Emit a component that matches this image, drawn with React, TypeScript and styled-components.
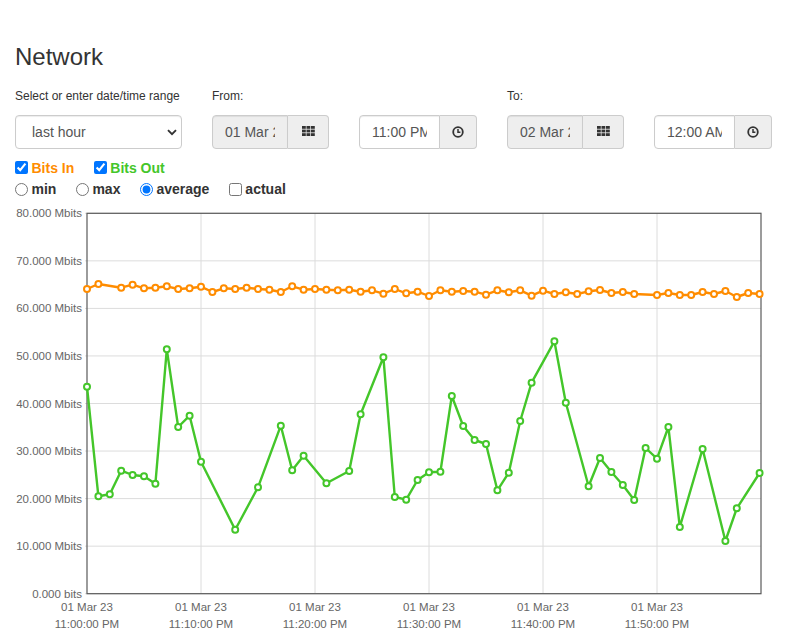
import styled, { createGlobalStyle } from 'styled-components';

const ORANGE = '#ff8c00';
const GREEN = '#44c62a';

// minute offset from 11:00 PM -> Mbits
const bitsIn: [number, number][] = [
  [0, 64.08], [1, 65.13], [3, 64.35], [4, 64.98], [5, 64.23], [6, 64.35], [7, 64.65],
  [8, 64.08], [9, 64.23], [10, 64.56], [11, 63.45], [12, 64.23], [13, 64.08], [14, 64.35],
  [15, 64.08], [16, 63.93], [17, 63.45], [18, 64.65], [19, 63.93], [20, 64.08], [21, 63.93],
  [22, 63.83], [23, 63.93], [24, 63.51], [25, 63.81], [26, 63.09], [27, 64.08], [28, 63.17],
  [29, 63.51], [30, 62.61], [31, 63.81], [32, 63.51], [33, 63.66], [34, 63.51], [35, 62.88],
  [36, 63.81], [37, 63.39], [38, 63.81], [39, 62.67], [40, 63.72], [41, 63.03], [42, 63.39],
  [43, 63.03], [44, 63.6], [45, 63.87], [46, 63.24], [47, 63.45], [48, 63.03], [50, 62.82],
  [51, 63.24], [52, 62.82], [53, 62.82], [54, 63.45], [55, 63.03], [56, 63.66], [57, 62.4],
  [58, 63.24], [59, 63.03],
];

const bitsOut: [number, number][] = [
  [0, 43.53], [1, 20.48], [2, 20.9], [3, 25.87], [4, 24.96], [5, 24.69], [6, 23.13],
  [7, 51.4], [8, 35.06], [9, 37.43], [10, 27.76], [13, 13.46], [15, 22.38], [17, 35.33],
  [18, 25.95], [19, 29.02], [21, 23.22], [23, 25.8], [24, 37.73], [26, 49.72], [27, 20.34],
  [28, 19.77], [29, 23.91], [30, 25.53], [31, 25.66], [32, 41.58], [33, 35.27], [34, 32.32],
  [35, 31.48], [36, 21.75], [37, 25.45], [38, 36.32], [39, 44.37], [41, 53.08], [42, 40.17],
  [44, 22.59], [45, 28.54], [46, 25.59], [47, 22.86], [48, 19.71], [49, 30.64], [50, 28.39],
  [51, 35.06], [52, 14.03], [54, 30.43], [56, 11.08], [57, 17.96], [59, 25.38],
];

const CHART_W = 757;
const CHART_H = 434;
const plot = { left: 72, right: 746, top: 13.3, bottom: 393.7 };
const xOf = (m: number) => plot.left + m * 11.4;
const yOf = (v: number) => plot.bottom - v * ((plot.bottom - plot.top) / 80);

const App = () => {
  return (
    <Page>
      <GlobalStyle />
      <Title>Network</Title>
      <Form>
        <FieldLabel>Select or enter date/time range</FieldLabel>
        <FieldLabel $span={2}>From:</FieldLabel>
        <FieldLabel $span={2}>To:</FieldLabel>

        <SelectWrap>
          <Select defaultValue="last hour">
            <option>last hour</option>
            <option>last 24 hours</option>
            <option>last week</option>
            <option>custom</option>
          </Select>
          <Chevron width="10" height="7" viewBox="0 0 10 7">
            <path d="M1 1.2 L5 5.2 L9 1.2" fill="none" stroke="#333" strokeWidth="1.9" />
          </Chevron>
        </SelectWrap>

        <InputGroup>
          <Field readOnly $muted defaultValue="01 Mar 2023" />
          <Addon $w={41}>
            <GridIcon />
          </Addon>
        </InputGroup>
        <InputGroup>
          <Field defaultValue="11:00 PM" />
          <Addon $w={37}>
            <ClockIcon />
          </Addon>
        </InputGroup>

        <InputGroup>
          <Field readOnly $muted defaultValue="02 Mar 2023" />
          <Addon $w={41}>
            <GridIcon />
          </Addon>
        </InputGroup>
        <InputGroup>
          <Field defaultValue="12:00 AM" />
          <Addon $w={37}>
            <ClockIcon />
          </Addon>
        </InputGroup>
      </Form>

      <OptionRow $top={8}>
        <Option $color={ORANGE}>
          <input type="checkbox" defaultChecked />
          Bits In
        </Option>
        <Option $color={GREEN}>
          <input type="checkbox" defaultChecked />
          Bits Out
        </Option>
      </OptionRow>
      <OptionRow $top={0}>
        <Option>
          <input type="radio" name="agg" />
          min
        </Option>
        <Option>
          <input type="radio" name="agg" />
          max
        </Option>
        <Option>
          <input type="radio" name="agg" defaultChecked />
          average
        </Option>
        <Option>
          <input type="checkbox" />
          actual
        </Option>
      </OptionRow>

      <Chart />
    </Page>
  );
};

export default App;

const Chart = () => {
  const yTicks = [0, 10, 20, 30, 40, 50, 60, 70, 80];
  const xTicks = [0, 10, 20, 30, 40, 50];
  const line = (data: [number, number][]) =>
    data.map(([m, v]) => `${xOf(m).toFixed(1)},${yOf(v).toFixed(1)}`).join(' ');

  return (
    <ChartSvg width={CHART_W} height={CHART_H} viewBox={`0 0 ${CHART_W} ${CHART_H}`}>
      {yTicks.map((v) => (
        <g key={v}>
          <line x1={plot.left - 2} x2={plot.right} y1={yOf(v)} y2={yOf(v)} stroke="#dcdcdc" strokeWidth="1" />
          <AxisText x={plot.left - 5} y={yOf(v) + 4} textAnchor="end">
            {v === 0 ? '0.000 bits' : `${v}.000 Mbits`}
          </AxisText>
        </g>
      ))}
      {xTicks.map((m) => (
        <g key={m}>
          {m > 0 && (
            <line x1={xOf(m)} x2={xOf(m)} y1={plot.top} y2={plot.bottom} stroke="#dcdcdc" strokeWidth="1" />
          )}
          <AxisText x={xOf(m)} y={411} textAnchor="middle">
            01 Mar 23
          </AxisText>
          <AxisText x={xOf(m)} y={428} textAnchor="middle">
            {`11:${m === 0 ? '00' : m}:00 PM`}
          </AxisText>
        </g>
      ))}
      <rect
        x={plot.left}
        y={plot.top}
        width={plot.right - plot.left}
        height={plot.bottom - plot.top}
        fill="none"
        stroke="#5a5a5a"
        strokeWidth="1.2"
      />

      <polyline points={line(bitsIn)} fill="none" stroke={ORANGE} strokeWidth="2.4" strokeLinejoin="round" />
      {bitsIn.map(([m, v]) => (
        <circle key={`i${m}`} cx={xOf(m)} cy={yOf(v)} r="3" fill="#fff" stroke={ORANGE} strokeWidth="2" />
      ))}

      <polyline points={line(bitsOut)} fill="none" stroke={GREEN} strokeWidth="2.4" strokeLinejoin="round" />
      {bitsOut.map(([m, v]) => (
        <circle key={`o${m}`} cx={xOf(m)} cy={yOf(v)} r="3" fill="#fff" stroke={GREEN} strokeWidth="2" />
      ))}
    </ChartSvg>
  );
};

const GridIcon = () => (
  <IconSvg width="13" height="10" viewBox="0 0 13 10" $lift={3}>
    {[0, 1, 2].map((r) =>
      [0, 1, 2].map((c) => (
        <rect key={`${r}${c}`} x={c * 4.5} y={r * 3.6} width="3.8" height="2.8" fill="#333" />
      ))
    )}
  </IconSvg>
);

const ClockIcon = () => (
  <IconSvg width="12" height="12" viewBox="0 0 12 12" $lift={1}>
    <circle cx="6" cy="6" r="4.8" fill="none" stroke="#333" strokeWidth="1.8" />
    <path d="M6 2.9 V6.3 H8.4" fill="none" stroke="#333" strokeWidth="1.5" />
  </IconSvg>
);

const GlobalStyle = createGlobalStyle`
  html, body {
    margin: 0;
    padding: 0;
    background: #fff;
  }
  body {
    font-family: "Liberation Sans", Arial, sans-serif;
    color: #333;
  }
`;

const Page = styled.div`
  padding: 44px 15px 0;
  width: 787px;
  box-sizing: border-box;
`;

const Title = styled.h1`
  margin: 0 0 18px;
  font-size: 24px;
  font-weight: 400;
  line-height: 26px;
  color: #333;
`;

const Form = styled.div`
  display: grid;
  grid-template-columns: 167px 117px 118px 117px 118px;
  column-gap: 30px;
  row-gap: 10px;
`;

const FieldLabel = styled.label<{ $span?: number }>`
  grid-column: span ${(p) => p.$span ?? 1};
  font-size: 12px;
  line-height: 17px;
  color: #333;
  white-space: nowrap;
`;

const SelectWrap = styled.div`
  position: relative;
  height: 34px;
`;

const Select = styled.select`
  appearance: none;
  box-sizing: border-box;
  width: 100%;
  height: 34px;
  padding: 0 0 0 16px;
  border: 1px solid #ccc;
  border-radius: 4px;
  background: #fff;
  box-shadow: inset 0 1px 1px rgba(0, 0, 0, 0.075);
  font: 14px "Liberation Sans", Arial, sans-serif;
  color: #555;
  outline: none;
`;

const Chevron = styled.svg`
  position: absolute;
  right: 5px;
  top: 14px;
  pointer-events: none;
`;

const InputGroup = styled.div`
  display: flex;
  height: 34px;
`;

const Field = styled.input<{ $muted?: boolean }>`
  box-sizing: border-box;
  flex: 1;
  min-width: 0;
  height: 34px;
  padding: 6px 12px;
  border: 1px solid #ccc;
  border-radius: 4px 0 0 4px;
  background: ${(p) => (p.$muted ? '#eee' : '#fff')};
  box-shadow: inset 0 1px 1px rgba(0, 0, 0, 0.075);
  font: 14px "Liberation Sans", Arial, sans-serif;
  color: #555;
  outline: none;
`;

const Addon = styled.span<{ $w: number }>`
  box-sizing: border-box;
  flex: none;
  width: ${(p) => p.$w}px;
  height: 34px;
  display: flex;
  align-items: center;
  justify-content: center;
  background: #eee;
  border: 1px solid #ccc;
  border-left: 0;
  border-radius: 0 4px 4px 0;
`;

const IconSvg = styled.svg<{ $lift: number }>`
  display: block;
  margin-bottom: ${(p) => p.$lift}px;
`;

const OptionRow = styled.div<{ $top: number }>`
  display: flex;
  align-items: center;
  gap: 19.5px;
  height: 21.5px;
  margin-top: ${(p) => p.$top}px;
`;

const Option = styled.label<{ $color?: string }>`
  display: inline-flex;
  align-items: center;
  gap: 3.5px;
  font-size: 14px;
  font-weight: 700;
  line-height: 20px;
  color: ${(p) => p.$color ?? '#333'};

  input {
    margin: 0;
    width: 13px;
    height: 13px;
  }
`;

const ChartSvg = styled.svg`
  display: block;
`;

const AxisText = styled.text`
  font-family: "Liberation Sans", Arial, sans-serif;
  font-size: 11.5px;
  fill: #666;
`;
